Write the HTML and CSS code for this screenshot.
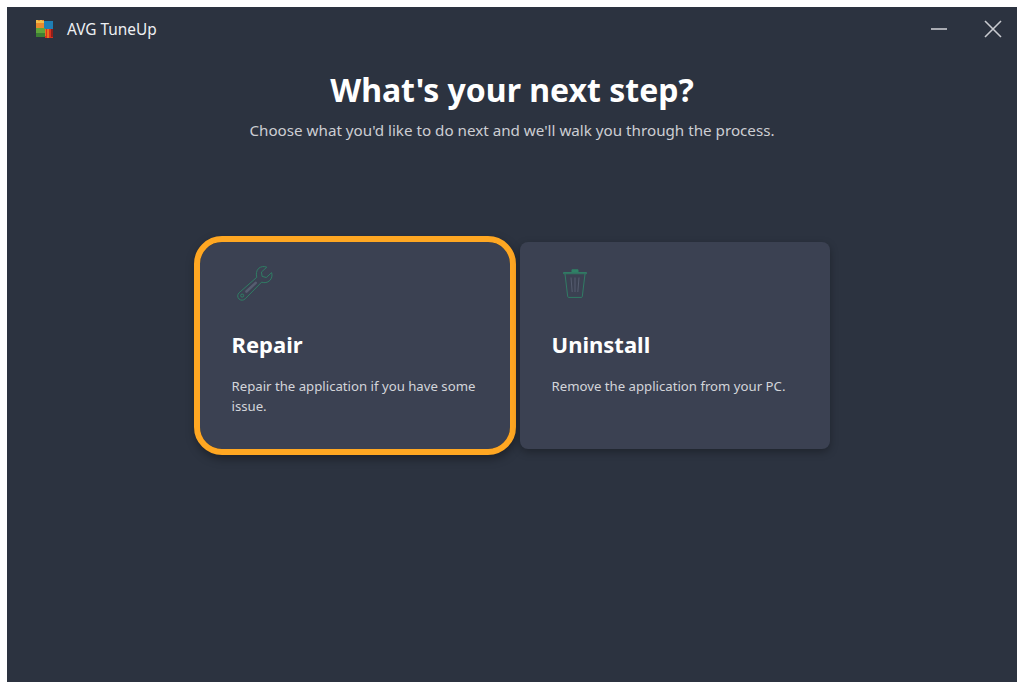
FILE: index.html
```html
<!DOCTYPE html>
<html lang="en">
<head>
  <meta charset="UTF-8" />
  <title>AVG TuneUp</title>
  <link rel="stylesheet" href="styles.css">
</head>
<body>
  <div class="window">
    <div class="titlebar">
      <div class="brand">
        <svg class="logo" width="20" height="20" viewBox="0 0 20 20">
          <rect x="2" y="1" width="8" height="8" fill="#e98a2c"/>
          <path d="M2 1h2v1h2V1h2v1h2v2H2z" fill="#f2c04a"/>
          <rect x="10" y="2" width="9" height="8" fill="#1f7fb5"/>
          <rect x="2" y="9" width="9" height="9" fill="#5fa53a"/>
          <path d="M2 14h9v4H2z" fill="#3d7f34"/>
          <rect x="11" y="10" width="8" height="9" fill="#d8301f"/>
          <path d="M13 10h2v9h-2zM11 10h1v7h-1z" fill="#e8711f"/>
          <rect x="17" y="10" width="2" height="8" fill="#8e1f1a"/>
        </svg>
        <span class="app-name">AVG TuneUp</span>
      </div>
      <div class="controls">
        <svg width="16" height="16" viewBox="0 0 16 16"><path d="M0 8h16" stroke="#c9cbd0" stroke-width="1.6"/></svg>
        <svg width="18" height="18" viewBox="0 0 18 18"><path d="M1 1l16 16M17 1L1 17" stroke="#c9cbd0" stroke-width="1.6" fill="none"/></svg>
      </div>
    </div>

    <div class="content">
      <h1>What's your next step?</h1>
      <p class="sub">Choose what you'd like to do next and we'll walk you through the process.</p>

      <div class="cards">
        <div class="card selected">
          <svg class="icon" width="44" height="44" viewBox="-1 0 38 38" fill="none">
            <path d="M22 5.500c2-1.700 4.800-2 7-1l-4.600 4.200.6 3.700 3.600 1 4.600-4.200c.8 2.500.2 5-1.600 6.800-2 1.900-4.600 2.300-7 1.400L10.400 31.800c-1.500 1.500-3.900 1.600-5.400.1-1.500-1.500-1.400-3.900.1-5.300L20.400 13.200c-.8-2.700-.4-5.700 1.600-7.700z" stroke="#2f8266" stroke-width="0.800" stroke-linejoin="round"/>
            <circle cx="7.800" cy="29" r="1.300" stroke="#2f8266" stroke-width="0.800"/>
            <path d="M11.500 25.500l8-7.500" stroke="#565d70" stroke-width="2.200" stroke-linecap="round"/>
          </svg>
          <h2>Repair</h2>
          <p>Repair the application if you have some issue.</p>
        </div>
        <div class="card">
          <svg class="icon" width="44" height="44" viewBox="0 0 44 44" fill="none">
            <path d="M11.500 10.500h23v1.200h-23z" stroke="#2f8266" stroke-width="0.900"/>
            <path d="M19.500 10v-1.500c0-.8.500-1.300 1.200-1.300h4.600c.7 0 1.200.5 1.200 1.300V10z" fill="#2f8266"/>
            <path d="M13 12l2.700 22.500c.1.600.4.900 1 .9h12.600c.6 0 .9-.3 1-.9L33 12" stroke="#2f8266" stroke-width="0.900"/>
            <path d="M19 15.500l1.200 14.500M23 15.500V30M27 15.500L25.800 30" stroke="#565d70" stroke-width="1"/>
          </svg>
          <h2>Uninstall</h2>
          <p>Remove the application from your PC.</p>
        </div>
      </div>
    </div>
  </div>
</body>
</html>
```

FILE: styles.css
```css
* {
  box-sizing: border-box;
  font-family: 'Noto Sans', 'Open Sans', sans-serif;
}
body {
  margin: 0;
  padding: 7px 8px 6px 7px;
  background: white;
}
.window {
  height: 675px;
  background: #2c3340;
  color: white;
}
.titlebar {
  display: flex;
  justify-content: space-between;
  align-items: center;
  height: 44px;
  padding: 0 15px 0 27px;
}
.brand {
  display: flex;
  align-items: center;
  gap: 13px;
}
.app-name {
  font-size: 15.400px;
  color: #eef0f3;
}
.controls {
  display: flex;
  align-items: center;
  gap: 37px;
}
.content {
  text-align: center;
}
h1 {
  margin: 15px 0 0;
  font-size: 32px;
  line-height: 48px;
  font-weight: 700;
}
.sub {
  margin: 4px 0 0;
  font-size: 15.200px;
  line-height: 24px;
  color: #ccced3;
}
.cards {
  display: flex;
  justify-content: center;
  gap: 10px;
  margin-top: 100px;
  padding-left: 5px;
}
.card {
  width: 310px;
  height: 207px;
  padding: 20px 32px 0;
  background: #3b4152;
  border-radius: 8px;
  box-shadow: 0 3px 8px rgba(0,0,0,0.3);
  text-align: left;
}
.card.selected {
  border-radius: 22px;
  outline: 6px solid #ffa722;
  outline-offset: 0;
  box-shadow: 1px 4px 10px 6px rgba(0,0,0,0.35);
}
.icon {
  display: block;
}
h2 {
  margin: 21px 0 0;
  font-size: 22px;
  line-height: 34px;
  font-weight: 700;
}
.card p {
  margin: 15px 0 0;
  font-size: 13.200px;
  line-height: 20px;
  color: #d3d5da;
}
```
